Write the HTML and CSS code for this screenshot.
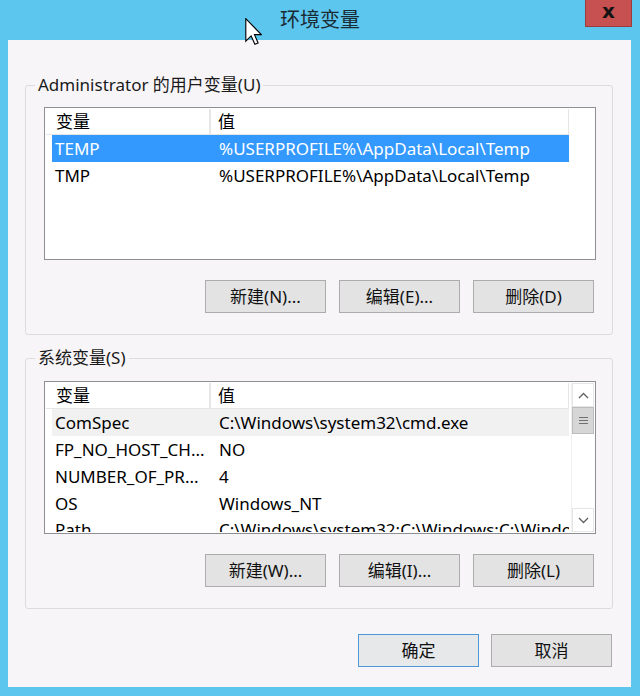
FILE: index.html
```html
<!DOCTYPE html>
<html lang="zh-CN">
<head>
<meta charset="utf-8">
<title>环境变量</title>
<link rel="stylesheet" href="styles.css">
</head>
<body>
<div class="window">
  <div class="titlebar">
    <span class="spacer"></span>
    <span class="title">环境变量</span>
    <button class="close" type="button">x</button>
  </div>
  <div class="client">
    <fieldset class="group">
      <legend>Administrator 的用户变量(U)</legend>
      <div class="group-body">
        <div class="list">
          <div class="list-main">
            <div class="list-header">
              <div class="hcell hcell-name">变量</div>
              <div class="hcell hcell-value">值</div>
            </div>
            <div class="row row-selected"><span class="cell-name">TEMP</span><span class="cell-value">%USERPROFILE%\AppData\Local\Temp</span></div>
            <div class="row"><span class="cell-name">TMP</span><span class="cell-value">%USERPROFILE%\AppData\Local\Temp</span></div>
          </div>
        </div>
        <div class="btn-row">
          <button class="btn" type="button">新建(N)...</button>
          <button class="btn" type="button">编辑(E)...</button>
          <button class="btn" type="button">删除(D)</button>
        </div>
      </div>
    </fieldset>

    <fieldset class="group group-sys">
      <legend>系统变量(S)</legend>
      <div class="group-body group-body-sys">
        <div class="list">
          <div class="list-main">
            <div class="list-header">
              <div class="hcell hcell-name">变量</div>
              <div class="hcell hcell-value">值</div>
            </div>
            <div class="row row-hot"><span class="cell-name">ComSpec</span><span class="cell-value">C:\Windows\system32\cmd.exe</span></div>
            <div class="row"><span class="cell-name">FP_NO_HOST_CH...</span><span class="cell-value">NO</span></div>
            <div class="row"><span class="cell-name">NUMBER_OF_PR...</span><span class="cell-value">4</span></div>
            <div class="row"><span class="cell-name">OS</span><span class="cell-value">Windows_NT</span></div>
            <div class="row row-last"><span class="cell-name">Path</span><span class="cell-value">C:\Windows\system32;C:\Windows;C:\Windows\System32\Wbem</span></div>
          </div>
          <div class="scrollbar">
            <div class="sb-arrow">
              <svg width="11" height="7" viewBox="0 0 11 7"><path d="M1 6 L5.5 1.5 L10 6" fill="none" stroke="#606060" stroke-width="1.3"/></svg>
            </div>
            <div class="sb-thumb">
              <svg width="9" height="9" viewBox="0 0 9 9"><path d="M0 1.5 H9 M0 4.5 H9 M0 7.5 H9" stroke="#707070" stroke-width="1.2"/></svg>
            </div>
            <div class="sb-track"></div>
            <div class="sb-arrow">
              <svg width="11" height="7" viewBox="0 0 11 7"><path d="M1 1 L5.5 5.5 L10 1" fill="none" stroke="#606060" stroke-width="1.3"/></svg>
            </div>
          </div>
        </div>
        <div class="btn-row">
          <button class="btn" type="button">新建(W)...</button>
          <button class="btn" type="button">编辑(I)...</button>
          <button class="btn" type="button">删除(L)</button>
        </div>
      </div>
    </fieldset>

    <div class="dialog-buttons">
      <button class="btn btn-default" type="button">确定</button>
      <button class="btn" type="button">取消</button>
    </div>
  </div>
  <svg class="cursor" width="17" height="28" viewBox="0 0 12 20">
    <path d="M0.5 0.5 L0.5 16.5 L4.3 12.8 L7 18.8 L9.3 17.8 L6.7 11.9 L11.6 11.9 Z" fill="#fff" stroke="#000" stroke-width="0.8" stroke-linejoin="miter"/>
  </svg>
</div>
</body>
</html>
```
FILE: styles.css
```css
* { box-sizing: border-box; }

html, body {
  margin: 0;
  padding: 0;
}

body {
  background: #5cc6ee;
  font-family: "Noto Sans", "Noto Sans CJK SC", sans-serif;
  font-size: 17px;
  color: #000;
}

.window {
  position: relative;
  width: 640px;
  height: 696px;
  background: #5cc6ee;
}

.titlebar {
  height: 40px;
  display: grid;
  grid-template-columns: 1fr auto 1fr;
  align-items: start;
}

.title {
  font-family: "Noto Sans CJK SC", sans-serif;
  font-size: 20px;
  line-height: 28px;
  padding-top: 5px;
  color: #1b2b35;
}

.close {
  justify-self: end;
  margin: 0 8px 0 0;
  width: 47px;
  height: 27px;
  padding: 0 0 4px;
  border: 1px solid #9a3c3c;
  border-top: none;
  background: #c75050;
  color: #141414;
  font-family: "DejaVu Sans", sans-serif;
  font-weight: bold;
  font-size: 20px;
  line-height: 20px;
}

.client {
  margin: 0 9px 0 8px;
  height: 647px;
  background: #f8f5f8;
  padding: 35px 18px 20px 17px;
  display: flex;
  flex-direction: column;
}

.group {
  margin: 0;
  padding: 0;
  min-width: 0;
  border: 1px solid #dddbdd;
  border-radius: 3px;
}

.group legend {
  margin-left: 9px;
  padding: 0 3px;
  line-height: 20px;
  font-size: 17px;
  color: #1a1a1a;
}

.group-sys {
  margin-top: 13px;
}

.group-body {
  padding: 12px 16px 21px 18px;
}

.group-body-sys {
  padding-top: 13px;
}

.list {
  height: 153px;
  border: 1px solid #8e8f94;
  background: #fff;
  padding: 1px;
  display: flex;
  overflow: hidden;
}

.list-main {
  flex: 1;
  min-width: 0;
  overflow: hidden;
}

.list-header {
  display: flex;
  width: 523px;
  height: 26px;
  border-bottom: 1px solid #e5e5e5;
  border-right: 1px solid #e5e5e5;
}

.hcell {
  line-height: 25px;
  white-space: nowrap;
}

.hcell-name {
  width: 165px;
  padding-left: 10px;
  border-right: 2px solid #e7e7e7;
}

.hcell-value {
  flex: 1;
  padding-left: 7px;
}

.row {
  display: flex;
  margin-left: 6px;
  width: 517px;
  height: 27px;
  line-height: 27px;
  white-space: nowrap;
  overflow: hidden;
}

.row-selected {
  background: #3399ff;
  color: #fff;
}

.row-hot {
  background: #f2f1f2;
}

.row-last {
  line-height: 25px;
}

.cell-name {
  width: 167px;
  flex: none;
  padding-left: 3px;
}

.cell-value {
  overflow: hidden;
}

.scrollbar {
  width: 23px;
  flex: none;
  display: flex;
  flex-direction: column;
  background: #fff;
  border-left: 1px solid #f0f0f0;
}

.sb-arrow {
  height: 24px;
  display: flex;
  align-items: center;
  justify-content: center;
  border: 1px solid #e6e6e6;
  background: #fff;
}

.sb-thumb {
  height: 27px;
  display: flex;
  align-items: center;
  justify-content: center;
  background: #d6d6d6;
  border: 1px solid #bdbdbd;
}

.sb-track {
  flex: 1;
  background: #fff;
}

.btn-row {
  display: flex;
  justify-content: flex-end;
  gap: 13px;
  margin-top: 20px;
  margin-right: 2px;
}

.btn {
  width: 121px;
  height: 33px;
  padding: 0 0 2px;
  border: 1px solid #acacac;
  background: #e3e3e3;
  font-family: "Noto Sans", "Noto Sans CJK SC", sans-serif;
  font-size: 17px;
  color: #111;
}

.btn-default {
  border-color: #4d96d8;
  background: #e6e8ea;
}

.dialog-buttons {
  display: flex;
  justify-content: flex-end;
  gap: 12px;
  margin-top: auto;
  margin-right: 1px;
}

.cursor {
  position: absolute;
  left: 245px;
  top: 18px;
}
```
